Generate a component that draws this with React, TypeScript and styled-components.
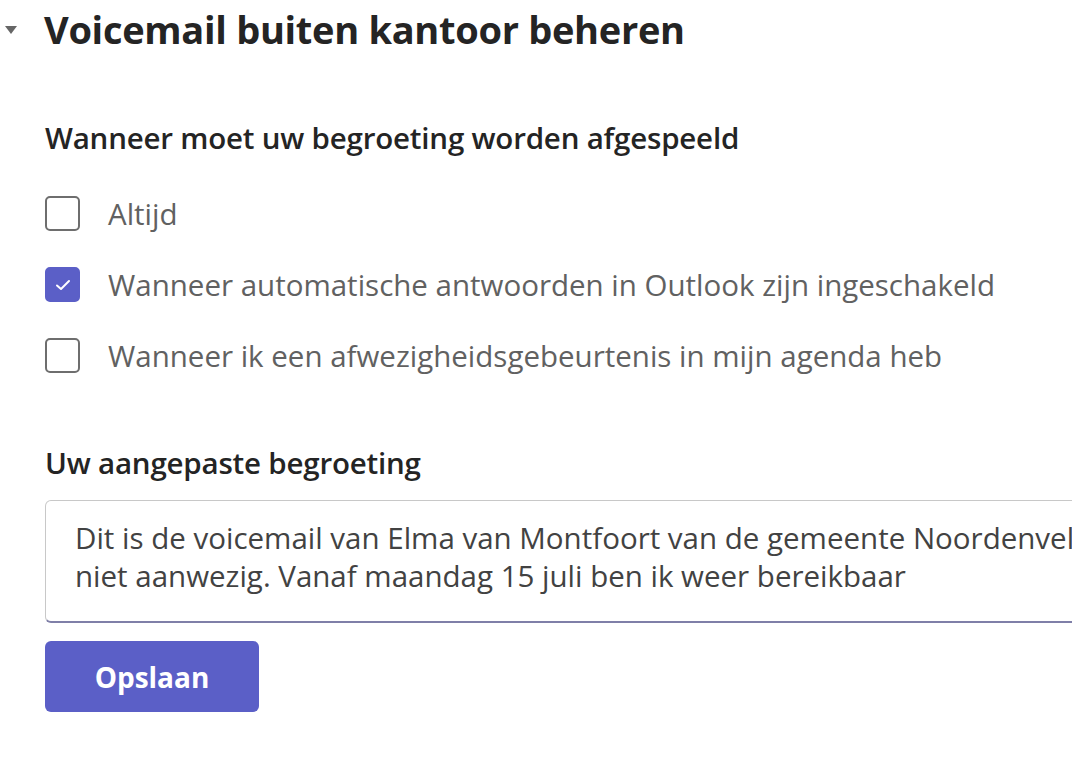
import React, { useState } from 'react';
import styled, { createGlobalStyle } from 'styled-components';

const GlobalStyle = createGlobalStyle`
  html, body {
    margin: 0;
    padding: 0;
    background: #ffffff;
    overflow: hidden;
  }
  body {
    font-family: "Open Sans", "Noto Sans", Arial, sans-serif;
    color: #242424;
  }
`;

const Page = styled.div`
  width: 1072px;
  height: 758px;
  overflow: hidden;
  background: #ffffff;
`;

const HeaderRow = styled.div`
  display: flex;
  align-items: center;
  height: 58px;
  padding-left: 5px;
`;

const Caret = styled.span`
  width: 0;
  height: 0;
  border-left: 6px solid transparent;
  border-right: 6px solid transparent;
  border-top: 8px solid #666666;
  margin-right: 27px;
  margin-top: 2px;
`;

const Title = styled.h1`
  margin: 0;
  font-size: 38px;
  font-weight: 700;
  color: #242424;
  letter-spacing: -0.3px;
`;

const Body = styled.div`
  padding-left: 45px;
  display: flex;
  flex-direction: column;
`;

const SectionLabel = styled.div<{ $top: number }>`
  margin-top: ${p => p.$top}px;
  font-size: 29.5px;
  font-weight: 600;
  color: #242424;
  line-height: 36px;
  letter-spacing: -0.2px;
`;

const OptionList = styled.div`
  display: flex;
  flex-direction: column;
  gap: 36px;
  margin-top: 40px;
`;

const Option = styled.label`
  display: flex;
  align-items: center;
  gap: 28px;
  height: 35px;
  cursor: pointer;
`;

const Box = styled.span<{ $checked: boolean }>`
  box-sizing: border-box;
  width: 35px;
  height: 35px;
  flex: none;
  border-radius: 5px;
  border: 2px solid ${p => (p.$checked ? '#5b5fc7' : '#6e6e6e')};
  background: ${p => (p.$checked ? '#5b5fc7' : '#ffffff')};
  display: flex;
  align-items: center;
  justify-content: center;
`;

const OptionText = styled.span`
  font-size: 29.5px;
  line-height: 35px;
  color: #616161;
`;

const Greeting = styled.div`
  box-sizing: border-box;
  margin-top: 19px;
  width: 1100px;
  height: 123px;
  border: 1px solid #c8c8c8;
  border-bottom: 2px solid #7f7fa8;
  border-radius: 6px;
  padding: 18px 29px;
  font-size: 29.5px;
  line-height: 38px;
  color: #424242;
  white-space: nowrap;
  overflow: hidden;
`;

const SaveButton = styled.button`
  margin-top: 18px;
  width: 214px;
  height: 71px;
  border: none;
  border-radius: 6px;
  background: #5b5fc7;
  color: #ffffff;
  font-family: inherit;
  font-size: 28px;
  font-weight: 700;
  cursor: pointer;
`;

const Check = () => (
  <svg width="16" height="12" viewBox="0 0 16 12">
    <path d="M2 6.5 L6 10 L14 2" fill="none" stroke="#ffffff" strokeWidth="2" strokeLinecap="round" strokeLinejoin="round" />
  </svg>
);

const options = [
  'Altijd',
  'Wanneer automatische antwoorden in Outlook zijn ingeschakeld',
  'Wanneer ik een afwezigheidsgebeurtenis in mijn agenda heb',
];

function App() {
  const [checked, setChecked] = useState([false, true, false]);

  const toggle = (i: number) => {
    setChecked(prev => prev.map((v, idx) => (idx === i ? !v : v)));
  };

  return (
    <Page>
      <GlobalStyle />
      <HeaderRow>
        <Caret />
        <Title>Voicemail buiten kantoor beheren</Title>
      </HeaderRow>
      <Body>
        <SectionLabel $top={62}>Wanneer moet uw begroeting worden afgespeeld</SectionLabel>
        <OptionList>
          {options.map((text, i) => (
            <Option key={text} onClick={() => toggle(i)}>
              <Box $checked={checked[i]}>{checked[i] && <Check />}</Box>
              <OptionText>{text}</OptionText>
            </Option>
          ))}
        </OptionList>
        <SectionLabel $top={72}>Uw aangepaste begroeting</SectionLabel>
        <Greeting>
          Dit is de voicemail van Elma van Montfoort van de gemeente Noordenveld. Ik ben
          <br />
          niet aanwezig. Vanaf maandag 15 juli ben ik weer bereikbaar
        </Greeting>
        <SaveButton>Opslaan</SaveButton>
      </Body>
    </Page>
  );
}

export default App;
